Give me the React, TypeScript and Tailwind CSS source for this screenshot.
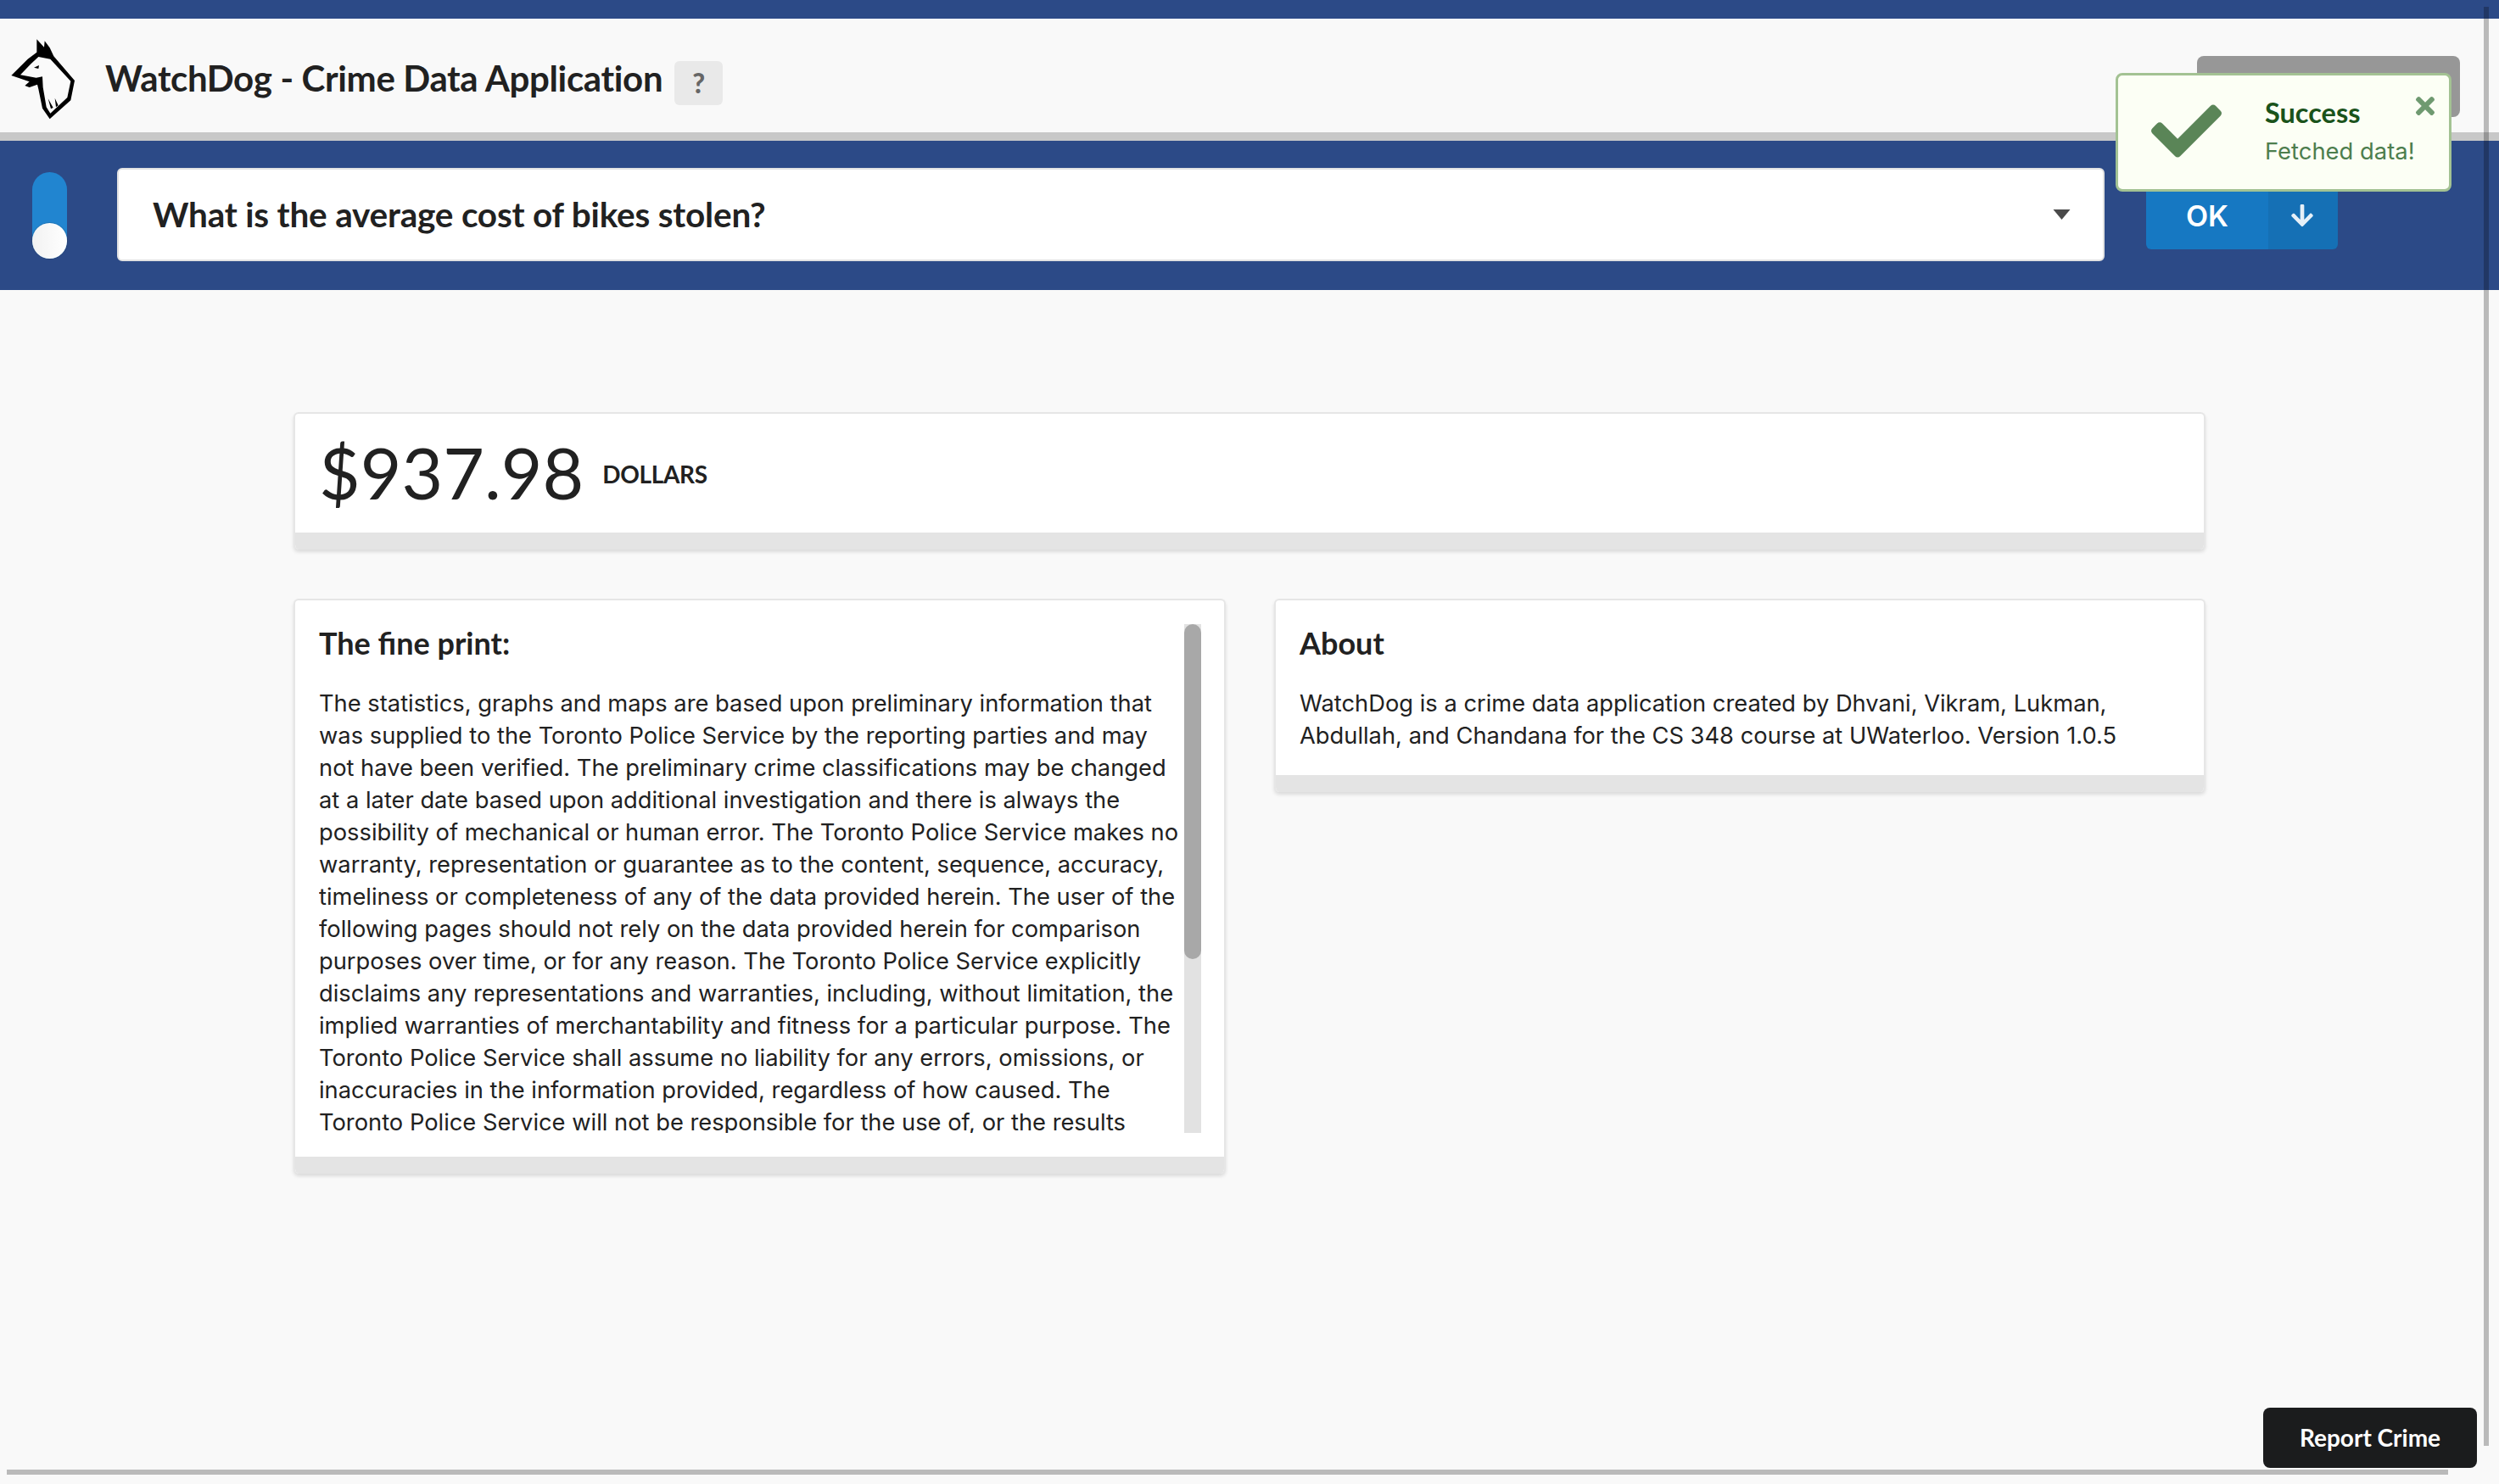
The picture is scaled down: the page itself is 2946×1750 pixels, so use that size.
import { FaArrowDown, FaCheck, FaTimes } from 'react-icons/fa';

// wrapped by hand so the lines break where they do in the app
const FINE_PRINT = [
  'The statistics, graphs and maps are based upon preliminary information that',
  'was supplied to the Toronto Police Service by the reporting parties and may',
  'not have been verified. The preliminary crime classifications may be changed',
  'at a later date based upon additional investigation and there is always the',
  'possibility of mechanical or human error. The Toronto Police Service makes no',
  'warranty, representation or guarantee as to the content, sequence, accuracy,',
  'timeliness or completeness of any of the data provided herein. The user of the',
  'following pages should not rely on the data provided herein for comparison',
  'purposes over time, or for any reason. The Toronto Police Service explicitly',
  'disclaims any representations and warranties, including, without limitation, the',
  'implied warranties of merchantability and fitness for a particular purpose. The',
  'Toronto Police Service shall assume no liability for any errors, omissions, or',
  'inaccuracies in the information provided, regardless of how caused. The',
  'Toronto Police Service will not be responsible for the use of, or the results',
];

function DogLogo(): JSX.Element {
  return (
    <svg viewBox="0 0 330 360" className="w-[110px] h-[120px] shrink-0">
      <path
        fill="#000"
        d="M130 52 L156 80 L158 58 L176 82 L190 112 L264 198 L250 268 L176 334 L150 296 L136 228 L132 212 L104 222 L88 216 L104 202 L40 180 L98 122 L130 98 Z"
      />
      <path
        fill="#fafafa"
        d="M136 114 L178 122 L250 200 L238 258 L178 314 L164 292 L152 222 L150 184 L128 188 L72 178 L108 140 Z"
      />
      <path fill="#000" d="M120 152 L138 144 L136 156 Z" />
      <path fill="#000" d="M170 262 L188 294 L180 298 Z M194 260 L206 286 L198 292 Z" />
    </svg>
  );
}

function Card({ className, children }: { className: string; children: React.ReactNode }): JSX.Element {
  return (
    <div className={`flex flex-col rounded-md border-2 border-b-0 border-[#e6e6e6] bg-white shadow-[0_3px_4px_rgba(0,0,0,0.12)] overflow-hidden ${className}`}>
      <div className="flex-1 min-h-0">{children}</div>
      <div className="h-[20px] shrink-0 bg-[#e4e4e4]" />
    </div>
  );
}

export default function App(): JSX.Element {
  return (
    <div className="relative w-screen h-screen overflow-hidden bg-[#f9f9f9] text-[#212121] font-['Inter',sans-serif]">
      <div className="h-[22px] bg-[#2c4a87]" />

      {/* title row */}
      <header className="flex items-center h-[144px] border-b-[10px] border-[#c8c8c8] pr-[46px]">
        <DogLogo />
        <h1 className="ml-[14px] mt-[6px] font-['Lato',sans-serif] font-bold text-[42px] leading-none tracking-[-0.35px]">
          WatchDog - Crime Data Application
        </h1>
        <span className="ml-[14px] mt-[18px] flex items-center justify-center w-[57px] h-[52px] rounded-md bg-[#e9e9e9] text-[#666] font-['Lato',sans-serif] font-black text-[32px]">
          ?
        </span>
        <div className="ml-auto mt-[26px] w-[310px] h-[72px] rounded-lg bg-[#979797]" />
      </header>

      {/* query row */}
      <div className="flex items-center h-[176px] pl-[38px] bg-[#2c4a87]">
        <div className="flex items-end w-[41px] h-[102px] rounded-full bg-[#2185d0]">
          <div className="w-[41px] h-[42px] rounded-full bg-gradient-to-r from-[#f2f2f2] to-white shadow-[0_0_0_1px_rgba(34,36,38,0.15)]" />
        </div>
        <div className="flex items-center justify-between ml-[59px] mb-[2px] w-[2343px] h-[110px] pl-[40px] pr-[38px] rounded-md bg-white border-2 border-[#e2e2e2]">
          <span className="font-['Lato',sans-serif] font-bold text-[40.5px] tracking-[-0.2px]">
            What is the average cost of bikes stolen?
          </span>
          <svg viewBox="0 0 20 12" className="w-[21px] h-[12px]">
            <path fill="#4a4a4a" d="M0 0 H20 L10 12 Z" />
          </svg>
        </div>
        <div className="flex ml-[49px] w-[226px] h-[80px] rounded-md overflow-hidden text-white">
          <div className="flex items-center justify-center w-[144px] bg-[#1678c2] font-semibold text-[34px]">OK</div>
          <div className="flex items-center justify-center flex-1 pr-[2px] bg-[#1570b5]">
            <FaArrowDown className="w-[30px] h-[30px] text-[#e6f0f8]" />
          </div>
        </div>
      </div>

      {/* results */}
      <main className="ml-[346px] w-[2254px] pt-[144px]">
        <Card className="h-[162px]">
          <div className="flex items-center h-full pl-[28px] pb-[2px]">
            <span className="font-['Lato',sans-serif] text-[84px] leading-none">$937.98</span>
            <span className="ml-[22px] mt-[4px] font-['Lato',sans-serif] font-bold text-[28px] tracking-[-0.3px]">DOLLARS</span>
          </div>
        </Card>

        <div className="flex items-start gap-[57px] mt-[58px]">
          <Card className="w-[1099px] h-[678px]">
            <div className="flex h-full pl-[28px] pr-[27px] pt-[28px] pb-[28px]">
              <div className="flex-1 min-w-0 overflow-hidden">
                <h2 className="font-['Lato',sans-serif] font-bold text-[36px] leading-[44px]">The fine print:</h2>
                <p className="mt-[31px] text-[27.3px] leading-[38px] whitespace-nowrap">
                  {FINE_PRINT.map((line) => (
                    <span key={line} className="block">{line}</span>
                  ))}
                </p>
              </div>
              <div className="w-[20px] ml-[6px] bg-[#e2e2e2]">
                <div className="h-[395px] rounded-full bg-[#a8a8a8]" />
              </div>
            </div>
          </Card>

          <Card className="flex-1 h-[228px]">
            <div className="pl-[28px] pr-[29px] pt-[28px]">
              <h2 className="font-['Lato',sans-serif] font-bold text-[36px] leading-[44px]">About</h2>
              <p className="mt-[31px] text-[27.3px] leading-[38px] w-[980px]">
                WatchDog is a crime data application created by Dhvani, Vikram, Lukman, Abdullah, and Chandana for the CS 348 course at UWaterloo. Version 1.0.5
              </p>
            </div>
          </Card>
        </div>
      </main>

      {/* toast */}
      <div className="absolute left-[2494px] top-[86px] flex w-[396px] h-[140px] rounded-lg border-[3px] border-[#a3c293] bg-[#fcfff5]">
        <FaCheck className="absolute left-[39px] top-[24px] w-[83px] h-[83px] text-[#5a8557]" />
        <FaTimes className="absolute right-[12px] top-[20px] w-[32px] h-[32px] text-[#6f9a70]" />
        <div className="ml-[173px] mt-[22px]">
          <div className="font-['Lato',sans-serif] font-bold text-[32.5px] leading-[44px] text-[#1a531b]">Success</div>
          <div className="mt-[4px] text-[27.4px] leading-[38px] text-[#4d7e4e]">Fetched data!</div>
        </div>
      </div>

      {/* report button */}
      <button className="absolute left-[2668px] top-[1660px] w-[252px] h-[71px] pb-[2px] rounded-lg bg-[#1b1c1d] text-white font-['Lato',sans-serif] font-bold text-[28px]">
        Report Crime
      </button>

      {/* overlay scrollbars */}
      <div className="absolute left-[2928px] top-[8px] w-[6px] h-[1697px] bg-black/25" />
      <div className="absolute left-[8px] top-[1733px] w-[2878px] h-[6px] bg-black/25" />
    </div>
  );
}
